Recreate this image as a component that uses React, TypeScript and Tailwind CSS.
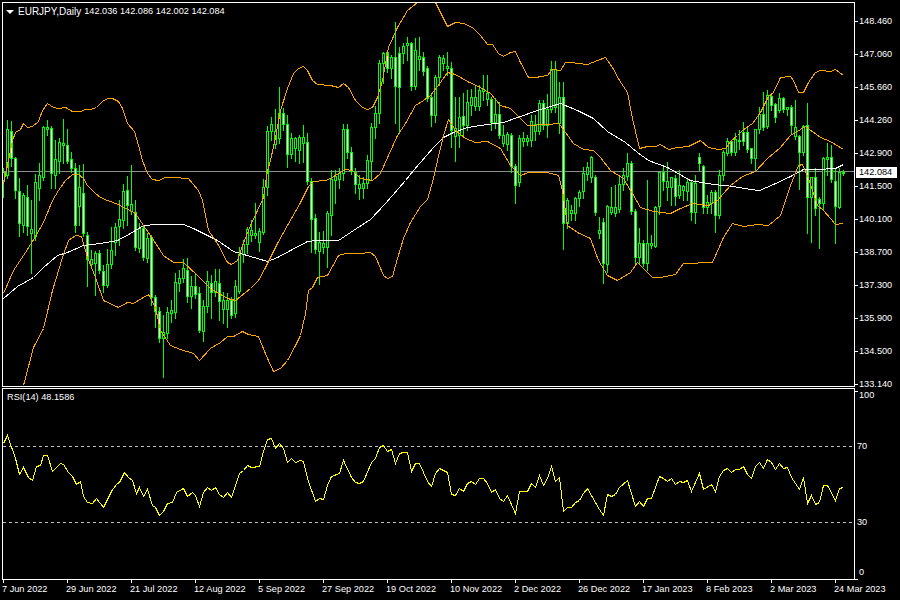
import React from "react";

// body top, body bottom, wick top, wick bottom, white-filled (x = 3 + 4i)
const bars: number[][] = [
[172,180,168,197,0],[129,175,120,178,0],[131,158,121,166,1],[158,190,157,198,1],[191,223,178,236,1],[195,225,193,232,0],[197,226,185,235,1],[229,233,200,273,0],
[182,236,174,240,0],[175,188,163,200,0],[127,177,126,180,0],[127,129,120,135,0],[128,173,126,188,1],[159,175,140,188,0],[142,161,138,173,0],[143,145,119,163,0],
[145,161,129,163,1],[159,168,152,172,1],[168,225,163,232,1],[187,206,165,225,0],[193,233,164,236,1],[235,259,232,286,1],[259,264,250,268,0],[253,263,251,295,0],
[253,270,250,273,1],[271,285,265,292,1],[264,285,249,287,0],[250,264,227,268,0],[227,242,223,255,0],[219,226,200,245,0],[191,220,184,228,0],[190,205,176,225,1],
[204,211,165,214,0],[212,247,200,250,1],[228,248,223,252,0],[228,257,225,260,1],[238,258,233,262,0],[237,297,235,305,1],[297,311,295,327,1],[311,338,307,342,1],
[332,338,315,377,0],[312,333,307,338,0],[310,313,300,322,0],[282,312,273,318,0],[278,283,270,291,0],[268,278,259,282,0],[270,296,258,302,1],[286,296,276,308,0],
[286,294,273,298,1],[293,330,287,332,1],[306,331,300,341,0],[281,306,271,312,0],[283,292,275,318,1],[281,292,269,296,0],[283,301,269,320,1],[300,309,292,323,0],
[300,309,293,327,0],[300,315,297,318,1],[286,313,280,317,0],[254,291,247,293,0],[244,254,240,262,0],[229,244,227,253,0],[230,235,220,241,0],[233,235,203,238,0],
[231,242,228,251,0],[187,232,179,234,0],[131,187,126,195,0],[124,131,117,140,0],[131,144,109,148,0],[113,138,87,143,0],[113,124,108,130,1],[124,154,115,167,1],
[138,154,133,158,0],[138,148,137,161,0],[137,150,135,163,0],[137,143,125,162,0],[142,181,133,184,1],[181,219,178,252,1],[218,249,214,253,1],[242,251,232,284,0],
[243,247,231,253,0],[213,247,211,267,0],[179,215,170,235,0],[176,180,170,203,0],[173,179,168,188,0],[129,173,124,180,0],[129,152,124,158,1],[152,171,147,174,1],
[172,184,168,193,1],[184,188,175,199,0],[183,188,177,198,0],[160,183,155,188,0],[127,161,123,180,0],[113,127,106,138,0],[63,113,60,123,0],[53,63,52,83,0],
[52,68,50,72,1],[57,68,55,78,0],[57,86,22,123,1],[53,87,47,133,1],[46,53,43,63,0],[43,45,37,60,0],[43,86,42,90,1],[50,86,38,89,0],
[56,59,37,70,0],[57,71,52,75,1],[68,98,66,101,1],[97,115,95,126,1],[77,115,75,122,0],[57,77,55,85,0],[58,63,55,70,0],[66,68,52,75,0],
[68,130,62,147,1],[128,136,97,161,0],[117,135,97,147,0],[116,125,93,137,1],[102,125,90,130,0],[97,105,89,115,0],[97,106,85,110,0],[90,106,85,110,0],
[89,91,75,100,0],[93,99,75,105,0],[99,122,97,130,1],[114,122,98,128,0],[114,135,102,138,1],[135,143,125,146,0],[134,144,132,150,0],[135,166,133,172,1],
[166,185,164,203,1],[138,182,135,186,0],[138,141,132,146,0],[138,141,135,145,0],[121,140,115,146,0],[124,131,115,140,0],[103,131,100,134,0],[103,125,100,129,1],
[109,125,94,137,0],[69,109,61,112,0],[69,107,61,112,0],[97,123,82,133,0],[97,223,82,249,1],[200,223,198,228,0],[210,213,205,220,0],[198,213,197,220,0],
[192,198,190,206,0],[173,191,167,198,0],[167,174,162,180,0],[157,177,156,182,0],[177,212,175,215,1],[230,233,217,238,0],[222,263,218,283,1],[206,264,205,272,0],
[207,212,187,214,0],[207,213,185,216,0],[184,209,175,212,0],[175,184,168,190,0],[163,176,153,180,0],[163,211,161,214,1],[211,257,209,263,1],[243,257,228,263,0],
[243,263,240,266,1],[243,263,180,270,0],[243,245,235,248,0],[207,246,206,247,0],[172,206,172,214,0],[172,181,167,190,1],[181,187,162,200,0],[177,187,177,205,0],
[178,196,175,205,1],[185,195,170,198,0],[186,190,185,200,0],[182,191,178,200,0],[182,212,180,220,1],[183,212,175,223,0],[157,163,153,170,1],[166,207,165,213,1],
[202,207,195,213,0],[192,203,190,213,0],[192,215,190,232,1],[175,215,170,218,0],[152,175,150,180,0],[141,153,138,155,0],[141,152,140,155,1],[139,152,133,155,0],
[140,141,130,149,0],[132,141,122,145,1],[132,149,127,152,1],[148,158,148,163,1],[129,158,129,170,0],[114,129,107,133,0],[114,127,92,130,1],[95,126,90,128,0],
[96,105,93,110,1],[104,117,103,122,1],[98,110,93,112,0],[98,109,97,112,1],[107,109,107,115,0],[107,125,105,133,1],[127,136,100,139,0],[136,152,135,189,1],
[126,152,125,155,0],[125,197,103,233,1],[177,197,177,242,0],[177,208,168,215,1],[199,203,197,248,1],[158,203,157,210,0],[157,159,143,175,0],[157,179,145,182,1],
[181,206,168,243,1],[172,207,168,208,0],[172,173,170,175,0],
];

const upper = [[3,184],[10,150],[12,140],[15,132],[20,129],[23,123],[27,127],[32,126],[38,121],[42,110],[47,103],[53,107],[58,108],[65,107],[72,111],[80,111],[85,109],[90,109],[96,107],[102,101],[107,98],[112,98],[118,101],[122,108],[127,123],[134,131],[138,145],[142,160],[147,173],[152,179],[158,180],[165,177],[172,177],[188,178],[192,183],[198,190],[202,200],[208,230],[217,243],[227,262],[231,264],[237,260],[242,245],[250,225],[257,210],[263,197],[267,170],[270,160],[275,137],[280,110],[287,88],[293,73],[298,68],[303,66],[307,70],[312,80],[317,84],[330,85],[338,87],[343,83],[348,87],[355,100],[362,107],[367,109],[372,107],[377,97],[382,80],[388,47],[397,27],[407,10],[417,2],[435,2],[440,12],[447,26],[455,22],[463,23],[472,27],[480,35],[487,44],[492,44],[498,53],[503,56],[510,52],[515,51],[520,62],[528,77],[535,77],[547,75],[552,69],[560,70],[565,62],[570,62],[587,64],[597,60],[605,57],[612,67],[619,80],[627,92],[632,118],[639,148],[647,146],[655,146],[660,144],[668,149],[677,147],[688,146],[700,140],[708,147],[718,149],[725,148],[730,141],[737,135],[742,130],[752,123],[760,112],[768,96],[773,92],[780,77],[790,76],[793,80],[798,92],[803,92],[808,82],[815,72],[820,70],[830,71],[835,69],[843,75]];
const mid = [[3,293],[13,270],[25,252],[35,236],[43,222],[52,200],[58,190],[65,180],[72,174],[78,174],[83,178],[87,185],[95,193],[100,197],[107,200],[118,204],[135,213],[143,225],[152,238],[163,255],[173,262],[183,262],[197,275],[210,288],[227,298],[235,300],[250,288],[258,280],[265,267],[277,243],[287,225],[300,202],[308,186],[313,181],[325,180],[330,178],[338,173],[345,169],[352,170],[360,178],[372,180],[380,173],[388,155],[397,135],[405,123],[415,105],[423,100],[430,95],[440,82],[447,72],[455,74],[467,81],[480,87],[490,93],[500,105],[510,108],[520,118],[527,125],[547,124],[558,123],[560,125],[573,143],[583,149],[593,150],[600,157],[610,170],[623,178],[632,193],[640,207],[653,211],[670,213],[680,208],[692,203],[708,205],[717,200],[730,185],[742,176],[755,171],[767,158],[780,147],[790,135],[805,126],[820,137],[830,141],[843,149]];
const lower = [[23,385],[33,347],[43,328],[52,290],[62,257],[68,240],[75,235],[81,236],[87,257],[95,277],[103,300],[118,307],[127,302],[133,303],[148,294],[155,307],[160,330],[170,345],[180,349],[193,353],[199,360],[210,348],[220,342],[227,336],[233,336],[242,331],[248,334],[258,336],[267,358],[273,371],[280,368],[287,360],[295,345],[300,335],[305,313],[308,290],[312,287],[317,277],[327,275],[338,255],[345,253],[360,253],[370,252],[375,256],[383,275],[387,278],[392,276],[397,258],[403,238],[410,222],[420,206],[427,199],[433,178],[437,160],[443,135],[448,119],[455,130],[465,138],[475,142],[487,141],[500,148],[510,165],[520,175],[528,172],[547,172],[558,175],[562,190],[567,225],[577,232],[590,238],[598,260],[607,275],[617,280],[630,272],[637,262],[643,268],[652,277],[660,277],[675,274],[683,263],[712,262],[723,237],[732,223],[743,226],[757,224],[768,225],[780,215],[790,185],[798,165],[802,164],[808,178],[817,205],[823,210],[830,218],[835,224],[843,223]];
const ma = [[3,298],[17,286],[33,277],[43,267],[57,255],[67,252],[83,245],[100,243],[117,240],[130,233],[143,225],[157,224],[183,224],[193,228],[217,240],[233,251],[257,258],[267,261],[277,257],[290,250],[307,241],[317,240],[338,240],[353,230],[370,219],[385,203],[405,180],[413,170],[433,147],[443,137],[453,132],[467,127],[487,124],[503,122],[520,116],[537,110],[560,103],[577,110],[593,118],[607,131],[625,142],[637,152],[648,160],[667,167],[690,180],[713,184],[733,186],[750,189],[759,190],[773,184],[790,176],[803,169],[817,169],[835,168],[843,164]];
const rsi = [[3,443],[7,435],[15,458],[19,474],[23,467],[28,477],[32,480],[36,466],[40,465],[43,455],[47,455],[52,471],[60,463],[63,464],[68,472],[72,476],[76,484],[80,481],[83,496],[87,502],[92,503],[96,498],[103,507],[112,489],[117,483],[119,482],[124,472],[128,477],[132,480],[136,493],[139,487],[143,496],[147,489],[152,505],[155,507],[159,515],[163,511],[167,503],[172,502],[176,492],[183,488],[187,496],[192,492],[195,495],[199,506],[203,492],[207,487],[211,490],[215,487],[219,494],[223,497],[227,492],[231,497],[239,473],[243,470],[247,465],[251,467],[259,466],[263,451],[267,439],[271,438],[275,448],[279,443],[283,448],[287,462],[291,458],[295,462],[300,460],[303,461],[307,478],[315,501],[319,498],[323,499],[327,485],[331,476],[339,473],[343,460],[351,477],[355,482],[359,483],[363,481],[371,462],[375,458],[379,447],[383,445],[387,451],[391,449],[395,463],[399,453],[403,452],[407,452],[411,471],[415,463],[419,463],[423,472],[427,481],[431,486],[435,473],[439,468],[447,472],[451,494],[455,495],[459,488],[463,491],[467,483],[471,481],[475,484],[479,478],[483,478],[487,483],[491,492],[495,489],[499,498],[503,501],[507,495],[515,513],[519,491],[527,491],[531,483],[535,487],[539,475],[543,485],[547,478],[551,466],[555,481],[559,477],[563,511],[567,507],[571,507],[575,502],[579,500],[583,493],[587,488],[599,509],[603,515],[607,494],[611,496],[615,494],[619,487],[627,480],[635,506],[639,501],[643,506],[647,498],[651,498],[659,476],[663,478],[667,481],[671,478],[675,484],[679,481],[683,482],[687,480],[691,491],[699,473],[703,489],[711,484],[715,491],[719,476],[723,470],[727,468],[731,472],[735,469],[739,469],[743,466],[747,474],[751,478],[755,466],[759,462],[763,468],[767,459],[771,462],[775,469],[779,463],[783,468],[787,467],[791,477],[799,489],[803,477],[807,503],[811,495],[815,504],[819,502],[823,485],[827,485],[835,500],[839,488],[843,487]];

const pts = (a: number[][]) => a.map((p) => `${p[0] + 0.5},${p[1] + 0.5}`).join(" ");

const prices = ["148.460","147.060","145.660","144.260","142.900","141.500","140.100","138.700","137.300","135.900","134.500","133.140"];
const dates = ["7 Jun 2022","29 Jun 2022","21 Jul 2022","12 Aug 2022","5 Sep 2022","27 Sep 2022","19 Oct 2022","10 Nov 2022","2 Dec 2022","26 Dec 2022","17 Jan 2023","8 Feb 2023","2 Mar 2023","24 Mar 2023"];
const font = "font-['Liberation_Sans',Arial,sans-serif] text-[9.2px] leading-[11px]";

function Line({ d, color }: { d: number[][]; color: string }) {
  return <polyline points={pts(d)} fill="none" stroke={color} strokeWidth={1} shapeRendering="crispEdges" />;
}

export default function App() {
  return (
    <div className={`w-[900px] h-[600px] bg-black text-white overflow-hidden pt-[2px] pl-[2px] ${font}`}>
      <div className="flex h-[385px]">
        <div className="relative w-[853px] h-[385px] border border-white">
          <svg className="block" width={851} height={383} viewBox="3 3 851 383">
            <rect x={3} y={171} width={851} height={1} fill="#8c8c8c" />
            {bars.map((b, i) => {
              const x = 3 + 4 * i;
              return (
                <g key={i} shapeRendering="crispEdges">
                  <rect x={x} y={b[2]} width={1} height={b[3] - b[2] + 1} fill="#00ff00" />
                  <rect x={x - 1} y={b[0]} width={3} height={b[1] - b[0] + 1} fill="#00ff00" />
                  {b[1] - b[0] > 1 && <rect x={x} y={b[0] + 1} width={1} height={b[1] - b[0] - 1} fill={b[4] ? "#ffffff" : "#000000"} />}
                </g>
              );
            })}
            <Line d={ma} color="#ffffff" />
            <Line d={upper} color="#ffa500" />
            <Line d={mid} color="#ffa500" />
            <Line d={lower} color="#ffa500" />
          </svg>
          <div className="absolute left-[3px] top-[3px] flex items-center h-[11px]">
            <svg width={8} height={4} viewBox="0 0 8 4">
              <polygon points="0,0 8,0 4,4" fill="#ffffff" />
            </svg>
            <span className="ml-[4px] whitespace-nowrap text-[10px]">EURJPY,Daily</span>
            <span className="ml-[3px] whitespace-nowrap">142.036 142.086 142.002 142.084</span>
          </div>
        </div>
        <div className="relative flex flex-col gap-[22px] pt-[14px] h-[385px]">
          {prices.map((p) => (
            <div key={p} className="flex items-center h-[11px]">
              <div className="w-[3px] h-px bg-white" />
              <span className="ml-[1px]">{p}</span>
            </div>
          ))}
          <div className="absolute left-[1px] top-[165px] w-[41px] h-[11px] bg-white text-black pl-[3px]">142.084</div>
        </div>
      </div>
      <div className="flex h-[192px] mt-px">
        <div className="relative w-[853px] h-[192px] border border-white">
          <svg className="block" width={851} height={190} viewBox="3 389 851 190">
            <line x1={3} x2={854} y1={446.5} y2={446.5} stroke="#c0c0c0" strokeDasharray="3 3" shapeRendering="crispEdges" />
            <line x1={3} x2={854} y1={522.5} y2={522.5} stroke="#c0c0c0" strokeDasharray="3 3" shapeRendering="crispEdges" />
            <Line d={rsi} color="#ffff00" />
          </svg>
          <span className="absolute left-[4px] top-[3px] whitespace-nowrap">RSI(14) 48.1586</span>
        </div>
        <div className="relative flex flex-col h-[192px] pl-[2px]">
          <div className="absolute left-0 top-[3px] w-[3px] h-px bg-white" />
          <div className="absolute left-0 top-[191px] w-[3px] h-px bg-white" />
          <span className="pl-[2px] mt-[2px] h-[11px]">100</span>
          <span className="mt-[40px] h-[11px]">70</span>
          <span className="mt-[65px] h-[11px]">30</span>
          <span className="pl-[2px] mt-[39px] h-[11px]">0</span>
        </div>
      </div>
      <div className="flex pl-px">
        {dates.map((d) => (
          <div key={d} className="w-[64px] shrink-0 flex flex-col">
            <div className="w-px h-[3px] bg-white" />
            <span className="whitespace-nowrap ml-[-1px] mt-[1px]">{d}</span>
          </div>
        ))}
      </div>
    </div>
  );
}
